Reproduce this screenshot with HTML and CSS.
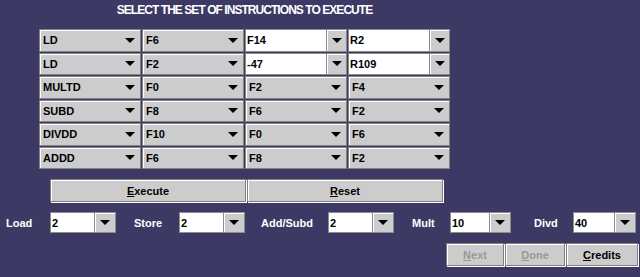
FILE: index.html
```html
<!DOCTYPE html>
<html lang="en">

<head>
  <meta charset="UTF-8">
  <title>Tomasulo Simulator</title>
  <link rel="stylesheet" href="styles.css">
</head>

<body>
  <div class="panel">
    <h1 class="title">SELECT THE SET OF INSTRUCTIONS TO EXECUTE</h1>

    <div class="grid">
      <div class="combo"><span class="value">LD</span><span class="arrow"></span></div>
      <div class="combo"><span class="value">F6</span><span class="arrow"></span></div>
      <div class="combo edit"><span class="value">F14</span><span class="btn"><span class="arrow"></span></span></div>
      <div class="combo edit"><span class="value">R2</span><span class="btn"><span class="arrow"></span></span></div>

      <div class="combo"><span class="value">LD</span><span class="arrow"></span></div>
      <div class="combo"><span class="value">F2</span><span class="arrow"></span></div>
      <div class="combo edit"><span class="value">-47</span><span class="btn"><span class="arrow"></span></span></div>
      <div class="combo edit"><span class="value">R109</span><span class="btn"><span class="arrow"></span></span></div>

      <div class="combo"><span class="value">MULTD</span><span class="arrow"></span></div>
      <div class="combo"><span class="value">F0</span><span class="arrow"></span></div>
      <div class="combo"><span class="value">F2</span><span class="arrow"></span></div>
      <div class="combo"><span class="value">F4</span><span class="arrow"></span></div>

      <div class="combo"><span class="value">SUBD</span><span class="arrow"></span></div>
      <div class="combo"><span class="value">F8</span><span class="arrow"></span></div>
      <div class="combo"><span class="value">F6</span><span class="arrow"></span></div>
      <div class="combo"><span class="value">F2</span><span class="arrow"></span></div>

      <div class="combo"><span class="value">DIVDD</span><span class="arrow"></span></div>
      <div class="combo"><span class="value">F10</span><span class="arrow"></span></div>
      <div class="combo"><span class="value">F0</span><span class="arrow"></span></div>
      <div class="combo"><span class="value">F6</span><span class="arrow"></span></div>

      <div class="combo"><span class="value">ADDD</span><span class="arrow"></span></div>
      <div class="combo"><span class="value">F6</span><span class="arrow"></span></div>
      <div class="combo"><span class="value">F8</span><span class="arrow"></span></div>
      <div class="combo"><span class="value">F2</span><span class="arrow"></span></div>
    </div>

    <div class="actions">
      <button class="button wide"><u>E</u>xecute</button>
      <button class="button wide"><u>R</u>eset</button>
    </div>
  </div>

  <div class="settings">
    <label class="label load">Load</label>
    <div class="combo edit small"><span class="value">2</span><span class="btn"><span class="arrow"></span></span></div>
    <label class="label store">Store</label>
    <div class="combo edit small"><span class="value">2</span><span class="btn"><span class="arrow"></span></span></div>
    <label class="label addsub">Add/Subd</label>
    <div class="combo edit small"><span class="value">2</span><span class="btn"><span class="arrow"></span></span></div>
    <label class="label mult">Mult</label>
    <div class="combo edit small mult-box"><span class="value">10</span><span class="btn"><span class="arrow"></span></span></div>
    <label class="label divd">Divd</label>
    <div class="combo edit small divd-box"><span class="value">40</span><span class="btn"><span class="arrow"></span></span></div>
  </div>

  <div class="footer">
    <button class="button next" disabled><u>N</u>ext</button>
    <button class="button done" disabled><u>D</u>one</button>
    <button class="button credits"><u>C</u>redits</button>
  </div>
</body>

</html>
```

FILE: styles.css
```css
body {
  margin: 0;
  width: 640px;
  height: 277px;
  background-color: #3c3a65;
  font-family: "Liberation Sans", Arial, sans-serif;
  font-weight: bold;
  font-size: 11px;
  color: #000;
  overflow: hidden;
}

.panel {
  width: 411px;
  padding-left: 39px;
}

.title {
  margin: 0;
  padding-top: 3px;
  height: 26px;
  text-align: center;
  color: #fff;
  font-size: 12px;
  letter-spacing: -0.95px;
  line-height: 14px;
}

.grid {
  display: grid;
  grid-template-columns: repeat(4, 1fr);
  grid-auto-rows: 22.5px;
  gap: 1px 1px;
}

.combo {
  display: flex;
  align-items: center;
  box-sizing: border-box;
  background-color: #cccccc;
  border: 1px solid #848484;
  box-shadow: inset 1px 1px 0 #fff;
  padding-right: 5px;
}

.combo .value {
  flex: 1;
  padding-left: 3px;
}

.arrow {
  width: 0;
  height: 0;
  border-left: 5px solid transparent;
  border-right: 5px solid transparent;
  border-top: 5px solid #000;
}

.combo.edit {
  background-color: #fff;
  box-shadow: none;
  padding-right: 0;
  border-color: #8c8c8c;
}

.combo.edit .value {
  padding-left: 1px;
}

.combo.edit .btn {
  display: flex;
  align-items: center;
  justify-content: center;
  align-self: stretch;
  width: 19px;
  background-color: #cccccc;
  border-left: 1px solid #8c8c8c;
  box-shadow: inset 1px 1px 0 #fff;
}

.actions {
  display: flex;
  gap: 1px;
  margin: 10px 0 0 11px;
}

.button {
  box-sizing: border-box;
  height: 23px;
  background-color: #cccccc;
  border: 1px solid #7f7f7f;
  box-shadow: inset 1px 1px 0 #fff, 1px 1px 0 #fff;
  font-family: inherit;
  font-weight: bold;
  font-size: 11px;
  color: #000;
  padding: 0;
}

.button.wide {
  width: 196px;
}

.button:disabled {
  color: #999999;
}

.settings {
  display: flex;
  align-items: center;
  height: 21px;
  margin-top: 10px;
  padding-left: 6px;
  color: #fff;
}

.label {
  font-size: 11px;
}

.load { width: 44px; }
.store { width: 45px; margin-left: 18px; }
.addsub { width: 67px; margin-left: 16px; }
.mult { width: 38px; margin-left: 18px; }
.divd { width: 39px; margin-left: 23px; }

.combo.small {
  width: 66px;
  height: 21px;
  color: #000;
}

.combo.small .btn {
  width: 20px;
}

.combo.mult-box { width: 61px; }
.combo.divd-box { width: 63px; }

.footer {
  display: flex;
  justify-content: flex-end;
  gap: 1px;
  margin-top: 10px;
  padding-right: 2px;
}

.next { width: 58px; }
.done { width: 60px; }
.credits { width: 72px; }
```
